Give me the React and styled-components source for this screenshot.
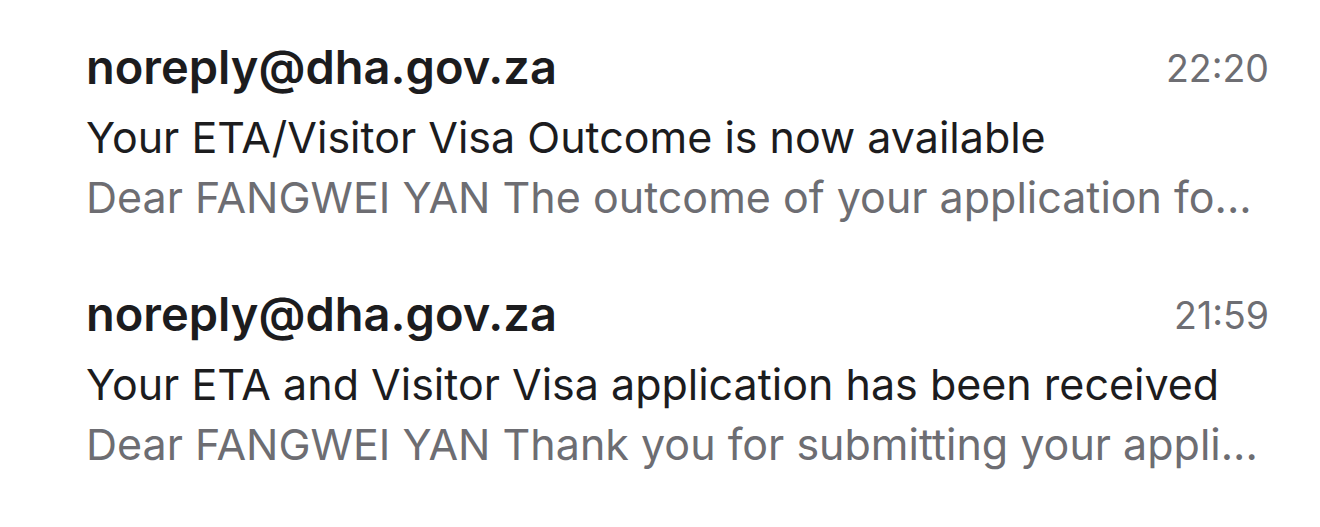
import React from "react";
import styled, { createGlobalStyle } from "styled-components";

const Global = createGlobalStyle`
  html, body { margin: 0; padding: 0; background: #ffffff; }
  body { font-family: Inter, "Noto Sans", sans-serif; -webkit-font-smoothing: antialiased; }
`;

const List = styled.div`
  width: 1320px;
  height: 527px;
  box-sizing: border-box;
  padding: 36px 51px 0 86px;
  display: flex;
  flex-direction: column;
  gap: 56px;
  overflow: hidden;
`;

const Row = styled.div`
  display: flex;
  flex-direction: column;
`;

const Header = styled.div`
  display: flex;
  justify-content: space-between;
  align-items: flex-start;
  height: 62px;
`;

const Sender = styled.span`
  font-size: 47px;
  font-weight: 600;
  color: #1c1c1e;
  line-height: 62px;
  white-space: nowrap;
`;

const Time = styled.span`
  font-size: 37.5px;
  font-weight: 400;
  color: #6e6e73;
  line-height: 66px;
`;

const Subject = styled.div`
  margin-top: 9px;
  font-size: 43px;
  color: #1c1c1e;
  line-height: 60px;
  white-space: nowrap;
`;

const Preview = styled.div`
  font-size: 43px;
  color: #6d6d72;
  line-height: 60px;
  white-space: nowrap;
  overflow: hidden;
`;

const mails = [
  {
    sender: "noreply@dha.gov.za",
    time: "22:20",
    subject: "Your ETA/Visitor Visa Outcome is now available",
    preview: "Dear FANGWEI YAN The outcome of your application fo...",
  },
  {
    sender: "noreply@dha.gov.za",
    time: "21:59",
    subject: "Your ETA and Visitor Visa application has been received",
    preview: "Dear FANGWEI YAN Thank you for submitting your appli...",
  },
];

export default function App() {
  return (
    <>
      <Global />
      <List>
        {mails.map((m, i) => (
          <Row key={i}>
            <Header>
              <Sender>{m.sender}</Sender>
              <Time>{m.time}</Time>
            </Header>
            <Subject>{m.subject}</Subject>
            <Preview>{m.preview}</Preview>
          </Row>
        ))}
      </List>
    </>
  );
}
